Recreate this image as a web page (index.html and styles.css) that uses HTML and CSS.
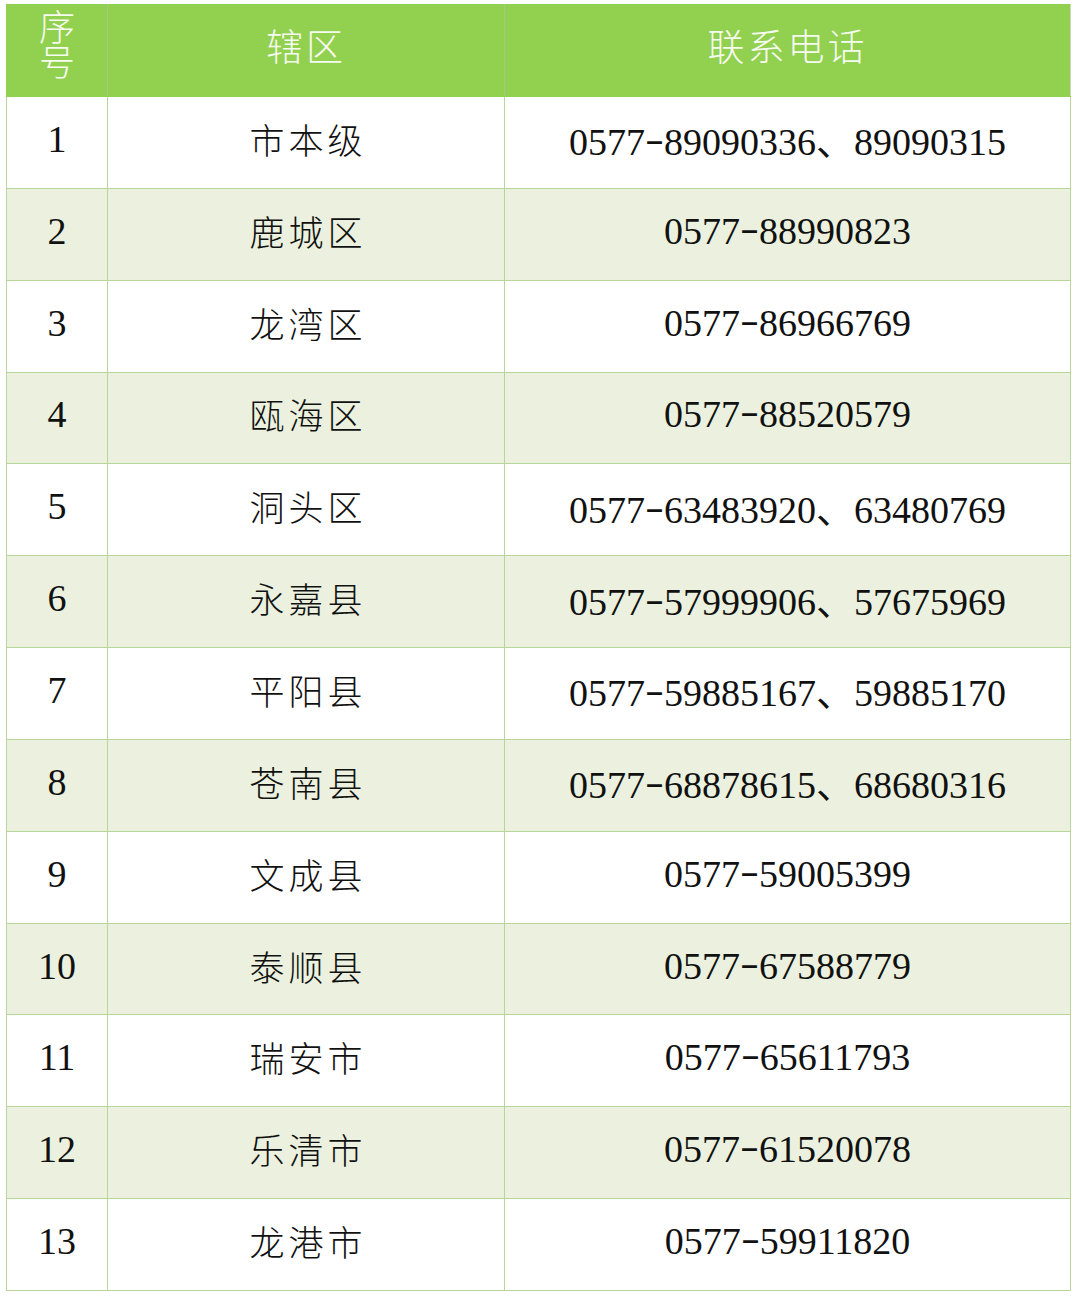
FILE: index.html
```html
<!DOCTYPE html>
<html lang="zh-CN">
<head>
<meta charset="utf-8">
<title>辖区联系电话</title>
<link rel="stylesheet" href="styles.css">
</head>
<body>
<div class="page">
<table class="phones">
  <colgroup>
    <col class="c-no">
    <col class="c-area">
    <col class="c-tel">
  </colgroup>
  <thead>
    <tr>
      <th class="no"><span class="stack">序号</span></th>
      <th>辖区</th>
      <th>联系电话</th>
    </tr>
  </thead>
  <tbody>
    <tr><td class="no">1</td><td class="area">市本级</td><td class="tel">0577<span class="dash">-</span>89090336、89090315</td></tr>
    <tr><td class="no">2</td><td class="area">鹿城区</td><td class="tel">0577<span class="dash">-</span>88990823</td></tr>
    <tr><td class="no">3</td><td class="area">龙湾区</td><td class="tel">0577<span class="dash">-</span>86966769</td></tr>
    <tr><td class="no">4</td><td class="area">瓯海区</td><td class="tel">0577<span class="dash">-</span>88520579</td></tr>
    <tr><td class="no">5</td><td class="area">洞头区</td><td class="tel">0577<span class="dash">-</span>63483920、63480769</td></tr>
    <tr><td class="no">6</td><td class="area">永嘉县</td><td class="tel">0577<span class="dash">-</span>57999906、57675969</td></tr>
    <tr><td class="no">7</td><td class="area">平阳县</td><td class="tel">0577<span class="dash">-</span>59885167、59885170</td></tr>
    <tr><td class="no">8</td><td class="area">苍南县</td><td class="tel">0577<span class="dash">-</span>68878615、68680316</td></tr>
    <tr><td class="no">9</td><td class="area">文成县</td><td class="tel">0577<span class="dash">-</span>59005399</td></tr>
    <tr><td class="no">10</td><td class="area">泰顺县</td><td class="tel">0577<span class="dash">-</span>67588779</td></tr>
    <tr><td class="no">11</td><td class="area">瑞安市</td><td class="tel">0577<span class="dash">-</span>65611793</td></tr>
    <tr><td class="no">12</td><td class="area">乐清市</td><td class="tel">0577<span class="dash">-</span>61520078</td></tr>
    <tr><td class="no">13</td><td class="area">龙港市</td><td class="tel">0577<span class="dash">-</span>59911820</td></tr>
  </tbody>
</table>
</div>
</body>
</html>
```
FILE: styles.css
```css
html, body {
  margin: 0;
  padding: 0;
  background: #ffffff;
}

.page {
  padding: 4px 0 0 6px;
}

.phones {
  border-collapse: collapse;
  table-layout: fixed;
  width: 1064px;
  font-family: "Liberation Serif", "Noto Sans CJK SC", serif;
  color: #111111;
}

.c-no { width: 101px; }
.c-area { width: 397px; }
.c-tel { width: 566px; }

.phones th,
.phones td {
  border: 1px solid #b9d69a;
  text-align: center;
  vertical-align: middle;
  padding: 0 0 7px 0;
}

.phones thead tr {
  height: 92px;
}

.phones th {
  background: #92d050;
  color: #f6fbef;
  font-family: "Noto Sans CJK SC", sans-serif;
  font-weight: 300;
  font-size: 37px;
  letter-spacing: 3px;
  padding-bottom: 12px;
  border-color: #92d050;
  border-right-color: #a6c884;
}

.phones th:last-child {
  border-right-color: #c9d8b8;
}

.phones th.no {
  padding-bottom: 6px;
}

.phones th .stack {
  display: inline-block;
  width: 36px;
  font-size: 36px;
  line-height: 35px;
  letter-spacing: 0;
}

.phones tbody tr {
  height: 91.85px;
}

.phones tbody tr:nth-child(even) td {
  background: #ebf1de;
}

.phones td.no {
  font-size: 38px;
}

.phones td.area {
  font-family: "Noto Sans CJK SC", sans-serif;
  font-weight: 300;
  font-size: 35px;
  letter-spacing: 4px;
  text-indent: 4px;
  padding-bottom: 8px;
}

.phones td.tel {
  font-size: 38px;
}

.phones .dash {
  display: inline-block;
  width: 0.5em;
  text-align: center;
  transform: translateY(-3px) scaleX(1.5);
}
```
